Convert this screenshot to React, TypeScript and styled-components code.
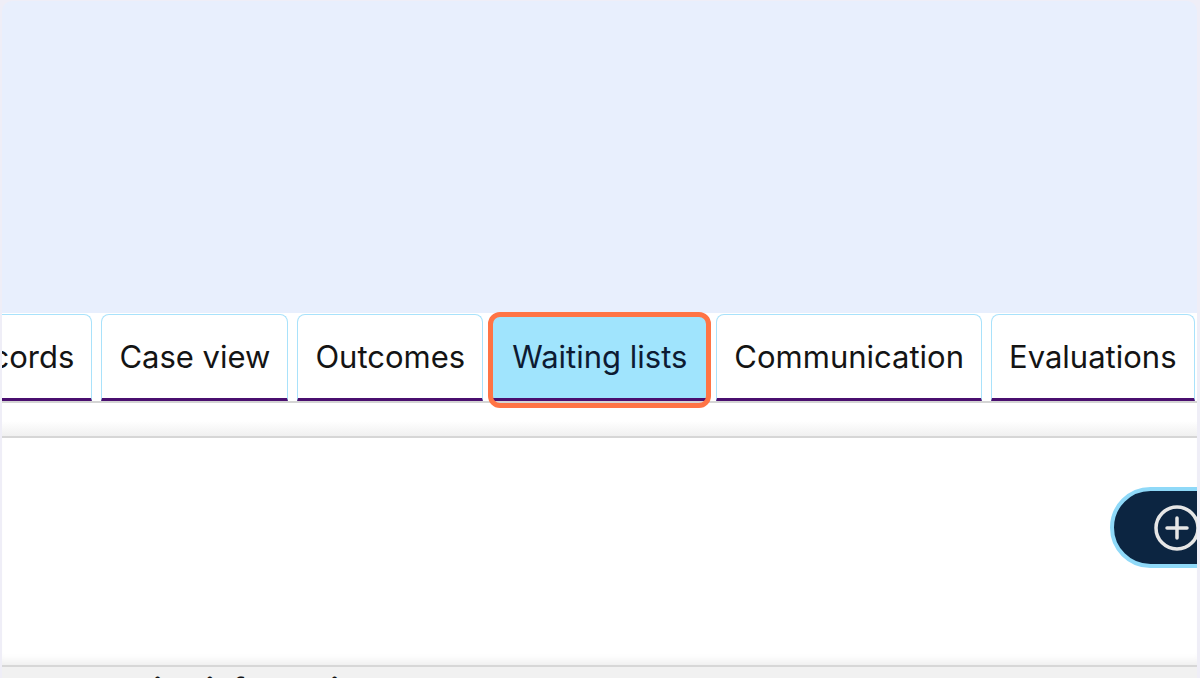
import React from "react";
import styled, { createGlobalStyle } from "styled-components";

const GlobalStyle = createGlobalStyle`
  html, body { margin: 0; padding: 0; }
  body {
    background: #efeef7;
    font-family: Inter, "Noto Sans", "Liberation Sans", sans-serif;
    overflow: hidden;
  }
`;

const Page = styled.div`
  width: 1200px;
  height: 678px;
  box-sizing: border-box;
  padding: 1px 3px 0 2px;
  display: flex;
  flex-direction: column;
  overflow: hidden;
`;

const Header = styled.header`
  height: 312px;
  flex: none;
  background: #e8effd;
  border-radius: 10px 10px 0 0;
`;

const TabStrip = styled.nav`
  height: 90px;
  flex: none;
  box-sizing: border-box;
  background: #ffffff;
  border-bottom: 2px solid #d4d4d4;
  display: flex;
  align-items: flex-end;
  overflow-x: clip;
  overflow-y: visible;
  position: relative;
  z-index: 1;
`;

const TabRow = styled.div`
  display: flex;
  gap: 9px;
  margin-left: -66px;
  align-items: flex-end;
`;

const Tab = styled.div<{ $active?: boolean }>`
  position: relative;
  flex: none;
  box-sizing: border-box;
  height: 87px;
  padding: 0 ${(p) => (p.$active ? "19px" : "17px")};
  display: flex;
  align-items: center;
  justify-content: center;
  font-size: 31px;
  color: ${(p) => (p.$active ? "#0d1b33" : "#141414")};
  background: ${(p) => (p.$active ? "#a0e4fd" : "#ffffff")};
  border: 1px solid #a9e2fb;
  border-bottom: 3px solid #4a0f6f;
  border-radius: 8px 8px 0 0;
  white-space: nowrap;
  ${(p) =>
    p.$active &&
    `
    &::after {
      content: "";
      position: absolute;
      left: -5px;
      right: -5px;
      top: -3px;
      bottom: -10px;
      border: 5px solid #ff7445;
      border-radius: 12px;
    }
  `}
`;

const SubBar = styled.div`
  height: 35px;
  flex: none;
  box-sizing: border-box;
  background: linear-gradient(#ffffff 55%, #f0f0f0);
  border-bottom: 2px solid #d6d6d6;
`;

const Content = styled.section`
  height: 227px;
  flex: none;
  background: #ffffff;
  display: flex;
  justify-content: flex-end;
  align-items: flex-start;
  padding-top: 49px;
  box-sizing: border-box;
  overflow: hidden;
  box-shadow: inset 0 -10px 8px -6px rgba(0, 0, 0, 0.07);
`;

const ButtonDock = styled.div`
  width: 87px;
  flex: none;
  display: flex;
`;

const AddButton = styled.button`
  flex: none;
  display: flex;
  align-items: center;
  gap: 14px;
  height: 81px;
  box-sizing: border-box;
  padding: 0 24px 0 39px;
  background: #0c2541;
  border: 4px solid #8fd9f8;
  border-radius: 42px;
  color: #ffffff;
  font-family: Inter, sans-serif;
  font-size: 27px;
  font-weight: 600;
  white-space: nowrap;
`;

const Footer = styled.footer`
  flex: 1;
  background: #f1f1f1;
  border-top: 2px solid #d7d7d7;
  overflow: hidden;
`;

const SectionTitle = styled.h2`
  margin: 0;
  padding: 4px 0 0 48px;
  font-size: 30px;
  line-height: 36px;
  font-weight: 700;
  color: #111;
`;

const PlusCircle = () => (
  <svg width="48" height="48" viewBox="0 0 48 48" fill="none">
    <circle cx="24" cy="24" r="21" stroke="#e6e6e6" strokeWidth="3.5" />
    <path d="M24 14v20M14 24h20" stroke="#e6e6e6" strokeWidth="3.5" strokeLinecap="round" />
  </svg>
);

const tabs = ["Records", "Case view", "Outcomes", "Waiting lists", "Communication", "Evaluations", "Documents"];

export default function App() {
  return (
    <>
      <GlobalStyle />
      <Page>
        <Header />
        <TabStrip>
          <TabRow>
            {tabs.map((t) => (
              <Tab key={t} $active={t === "Waiting lists"}>
                {t}
              </Tab>
            ))}
          </TabRow>
        </TabStrip>
        <SubBar />
        <Content>
          <ButtonDock>
            <AddButton>
              <PlusCircle />
              Add to waiting list
            </AddButton>
          </ButtonDock>
        </Content>
        <Footer>
          <SectionTitle>Allocation information</SectionTitle>
        </Footer>
      </Page>
    </>
  );
}
